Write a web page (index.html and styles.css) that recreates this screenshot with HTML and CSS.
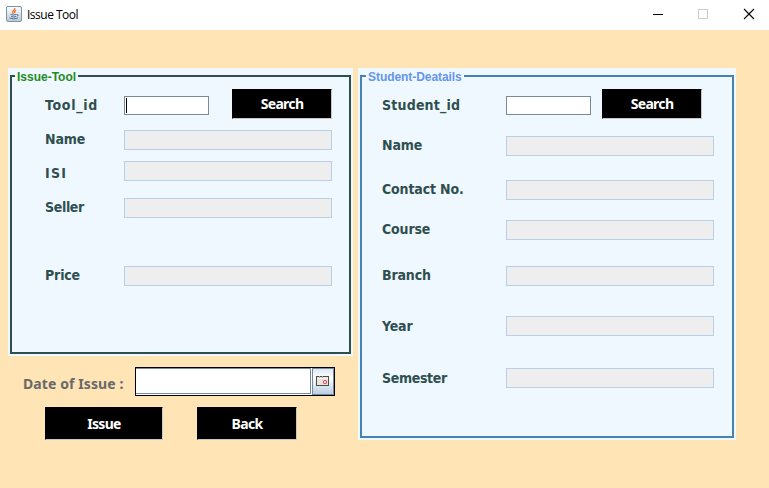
FILE: index.html
```html
<!DOCTYPE html>
<html lang="en">
<head>
<meta charset="utf-8">
<title>Issue Tool</title>
<link rel="stylesheet" href="styles.css">
</head>
<body>
<header class="titlebar">
  <svg class="app-icon" width="16" height="16" viewBox="0 0 16 16">
    <defs><linearGradient id="tile" x2="0" y2="1"><stop stop-color="#fff"/><stop offset="1" stop-color="#b9c8d6"/></linearGradient></defs>
    <rect x=".5" y=".5" width="15" height="15" rx="1.5" fill="url(#tile)" stroke="#7f94a8"/>
    <path d="M8.800 2C9.500 4 6 4.500 6.600 6.500Q7 7.200 7.500 8M10 4.300C8 5.300 8.300 6 8.700 7" fill="none" stroke="#e3742c" stroke-width="1.300"/>
    <path d="M4.500 8.500Q7 9.500 10.500 8.500M11 8.500Q13.500 8.500 11 10.500M5 10.500Q7.500 11.300 10 10.500M3.500 12Q7.500 13.800 12 12" fill="none" stroke="#54748f"/>
  </svg>
  <span class="window-title">Issue Tool</span>
  <svg class="window-controls" width="102" height="12" viewBox="0 0 102 12" fill="none" shape-rendering="crispEdges">
    <path d="M0 6.500H10" stroke="#000"/>
    <rect x="45.500" y="1.500" width="9" height="9" stroke="#ccc"/>
    <path d="M91 1L101 11M101 1L91 11" stroke="#000" stroke-width="1.100" shape-rendering="auto"/>
  </svg>
</header>
<main class="workspace">
  <div class="left-column">
    <section class="panel tool-panel">
      <fieldset class="frame">
        <legend>Issue-Tool</legend>
        <div class="row search-row"><label>Tool_id</label><div class="input focused"></div><button class="search">Search</button></div>
        <div class="row"><label>Name</label><div class="output"></div></div>
        <div class="row isi"><label>ISI</label><div class="output"></div></div>
        <div class="row seller"><label>Seller</label><div class="output"></div></div>
        <div class="row price"><label>Price</label><div class="output"></div></div>
      </fieldset>
    </section>
    <div class="date-row">
      <label>Date of Issue :</label>
      <div class="date-picker">
        <div class="date-input"></div>
        <div class="calendar-button">
          <svg width="14" height="12" viewBox="0 0 14 12"><rect x=".5" y=".5" width="12" height="9" fill="#e9e5da" stroke="#4d4b48"/><path d="M1 2.500H12" stroke="#fff"/><path d="M3.500 0V2M6.500 0V2" stroke="#aaa69c"/><circle cx="9" cy="6" r="1.700" fill="#f8dcdc" stroke="#e04a62"/></svg>
        </div>
      </div>
    </div>
    <div class="actions"><button class="issue">Issue</button><button class="back">Back</button></div>
  </div>
  <section class="panel student-panel">
    <fieldset class="frame">
      <legend>Student-Deatails</legend>
      <div class="row search-row"><label>Student_id</label><div class="input"></div><button class="search">Search</button></div>
      <div class="row name"><label>Name</label><div class="output"></div></div>
      <div class="row contact"><label>Contact No.</label><div class="output"></div></div>
      <div class="row course"><label>Course</label><div class="output"></div></div>
      <div class="row branch"><label>Branch</label><div class="output"></div></div>
      <div class="row year"><label>Year</label><div class="output"></div></div>
      <div class="row semester"><label>Semester</label><div class="output"></div></div>
    </fieldset>
  </section>
</main>
</body>
</html>
```
FILE: styles.css
```css
* { box-sizing: border-box; }
body {
  margin: 0;
  height: 488px;
  overflow: hidden;
  background: #ffe4b5;
  font-family: "DejaVu Sans Condensed", "DejaVu Sans", sans-serif;
}
.titlebar {
  display: flex;
  height: 30px;
  padding: 6px 14px 0 6px;
  background: #fff;
}
.window-title {
  margin-left: 5px;
  font: 12px/17px "Open Sans", sans-serif;
  letter-spacing: -.5px;
  color: #000;
}
.window-controls { margin: 2px 0 0 auto; }
.workspace {
  display: flex;
  gap: 5px;
  padding: 38px 0 0 8px;
}
.left-column { width: 345px; }
.panel { padding: 0 2px 2px; background: #f0f8ff; }
.tool-panel { height: 288px; }
.student-panel { width: 378px; height: 372px; }
.frame {
  height: 100%;
  margin: 0;
  padding: 0;
  border: 2px solid #2f4f4f;
  min-width: 0;
}
.student-panel .frame { border-color: #4682b4; }
legend {
  height: 16px;
  margin-left: 3px;
  padding: 0 2px;
  font: bold 12px/18px "Liberation Sans", sans-serif;
  color: #228b22;
}
.student-panel legend { margin-left: 4px; letter-spacing: -.06px; color: #6495ed; }
.row {
  display: flex;
  height: 20px;
  margin-left: 33px;
}
.student-panel .row { margin-left: 20px; }
.row label {
  width: 79px;
  font-size: 14px;
  font-weight: bold;
  line-height: 19px;
  letter-spacing: -.15px;
  color: #2f4f4f;
  white-space: nowrap;
}
.student-panel label { width: 124px; }
.output {
  width: 208px;
  height: 20px;
  border: 1px solid #b8cfe5;
  background: #eee;
}
.input {
  width: 85px;
  height: 19px;
  border: 1px solid #7a8a99;
  background: #fff;
}
.focused::before {
  content: "";
  display: block;
  width: 1px;
  height: 15px;
  margin: 1px 0 0 1px;
  background: #000;
}
.search-row { height: 30px; margin-top: 5px; }
.search-row .input { margin-top: 7px; }
.search-row label { margin-top: 7px; letter-spacing: .2px; }
.tool-panel .search-row label { letter-spacing: .7px; }
.search-row + .row { margin-top: 11px; }
.isi { margin-top: 11px; }
.isi label { margin-top: 3px; letter-spacing: 1.3px; }
.seller { margin-top: 17px; }
.seller label { letter-spacing: -.35px; }
.price { margin-top: 48px; }
.student-panel .name { margin-top: 17px; }
.contact { margin-top: 24px; }
.course { margin-top: 20px; }
.branch { margin-top: 26px; }
.year { margin-top: 30px; }
.year label, .semester label { margin-top: 1px; }
.semester { margin-top: 32px; }
.semester label { letter-spacing: -.35px; }
button {
  height: 33px;
  padding: 0;
  border: 1px solid;
  border-color: #000 #c8c8c8 #c8c8c8 #000;
  background: #000;
  color: #fff;
  font: bold 14px/18px "Noto Sans", sans-serif;
  letter-spacing: -.7px;
}
.search { width: 100px; height: 30px; margin-left: 23px; }
.student-panel .search { margin-left: 11px; }
.date-row {
  display: flex;
  height: 29px;
  margin: 11px 0 0 15px;
}
.date-row label {
  width: 112px;
  font: bold 14px/33px "Noto Sans", sans-serif;
  letter-spacing: .1px;
  color: #696969;
  white-space: nowrap;
}
.date-picker {
  display: flex;
  width: 200px;
  height: 29px;
  border: 1px solid #000;
  background: #fff;
}
.date-input {
  width: 175px;
  border: 1px solid #7a8a99;
  border-width: 1px 1px 1px 0;
  height: 26px;
}
.calendar-button {
  display: grid;
  place-items: center;
  width: 22px;
  margin-left: 1px;
  border: 1px solid #7a8a99;
  background: linear-gradient(#dce8f3, #fff 35%, #b8cfe5);
}
.actions { display: flex; gap: 34px; margin: 11px 0 0 37px; }
.issue { width: 118px; }
.back { width: 100px; }
```
